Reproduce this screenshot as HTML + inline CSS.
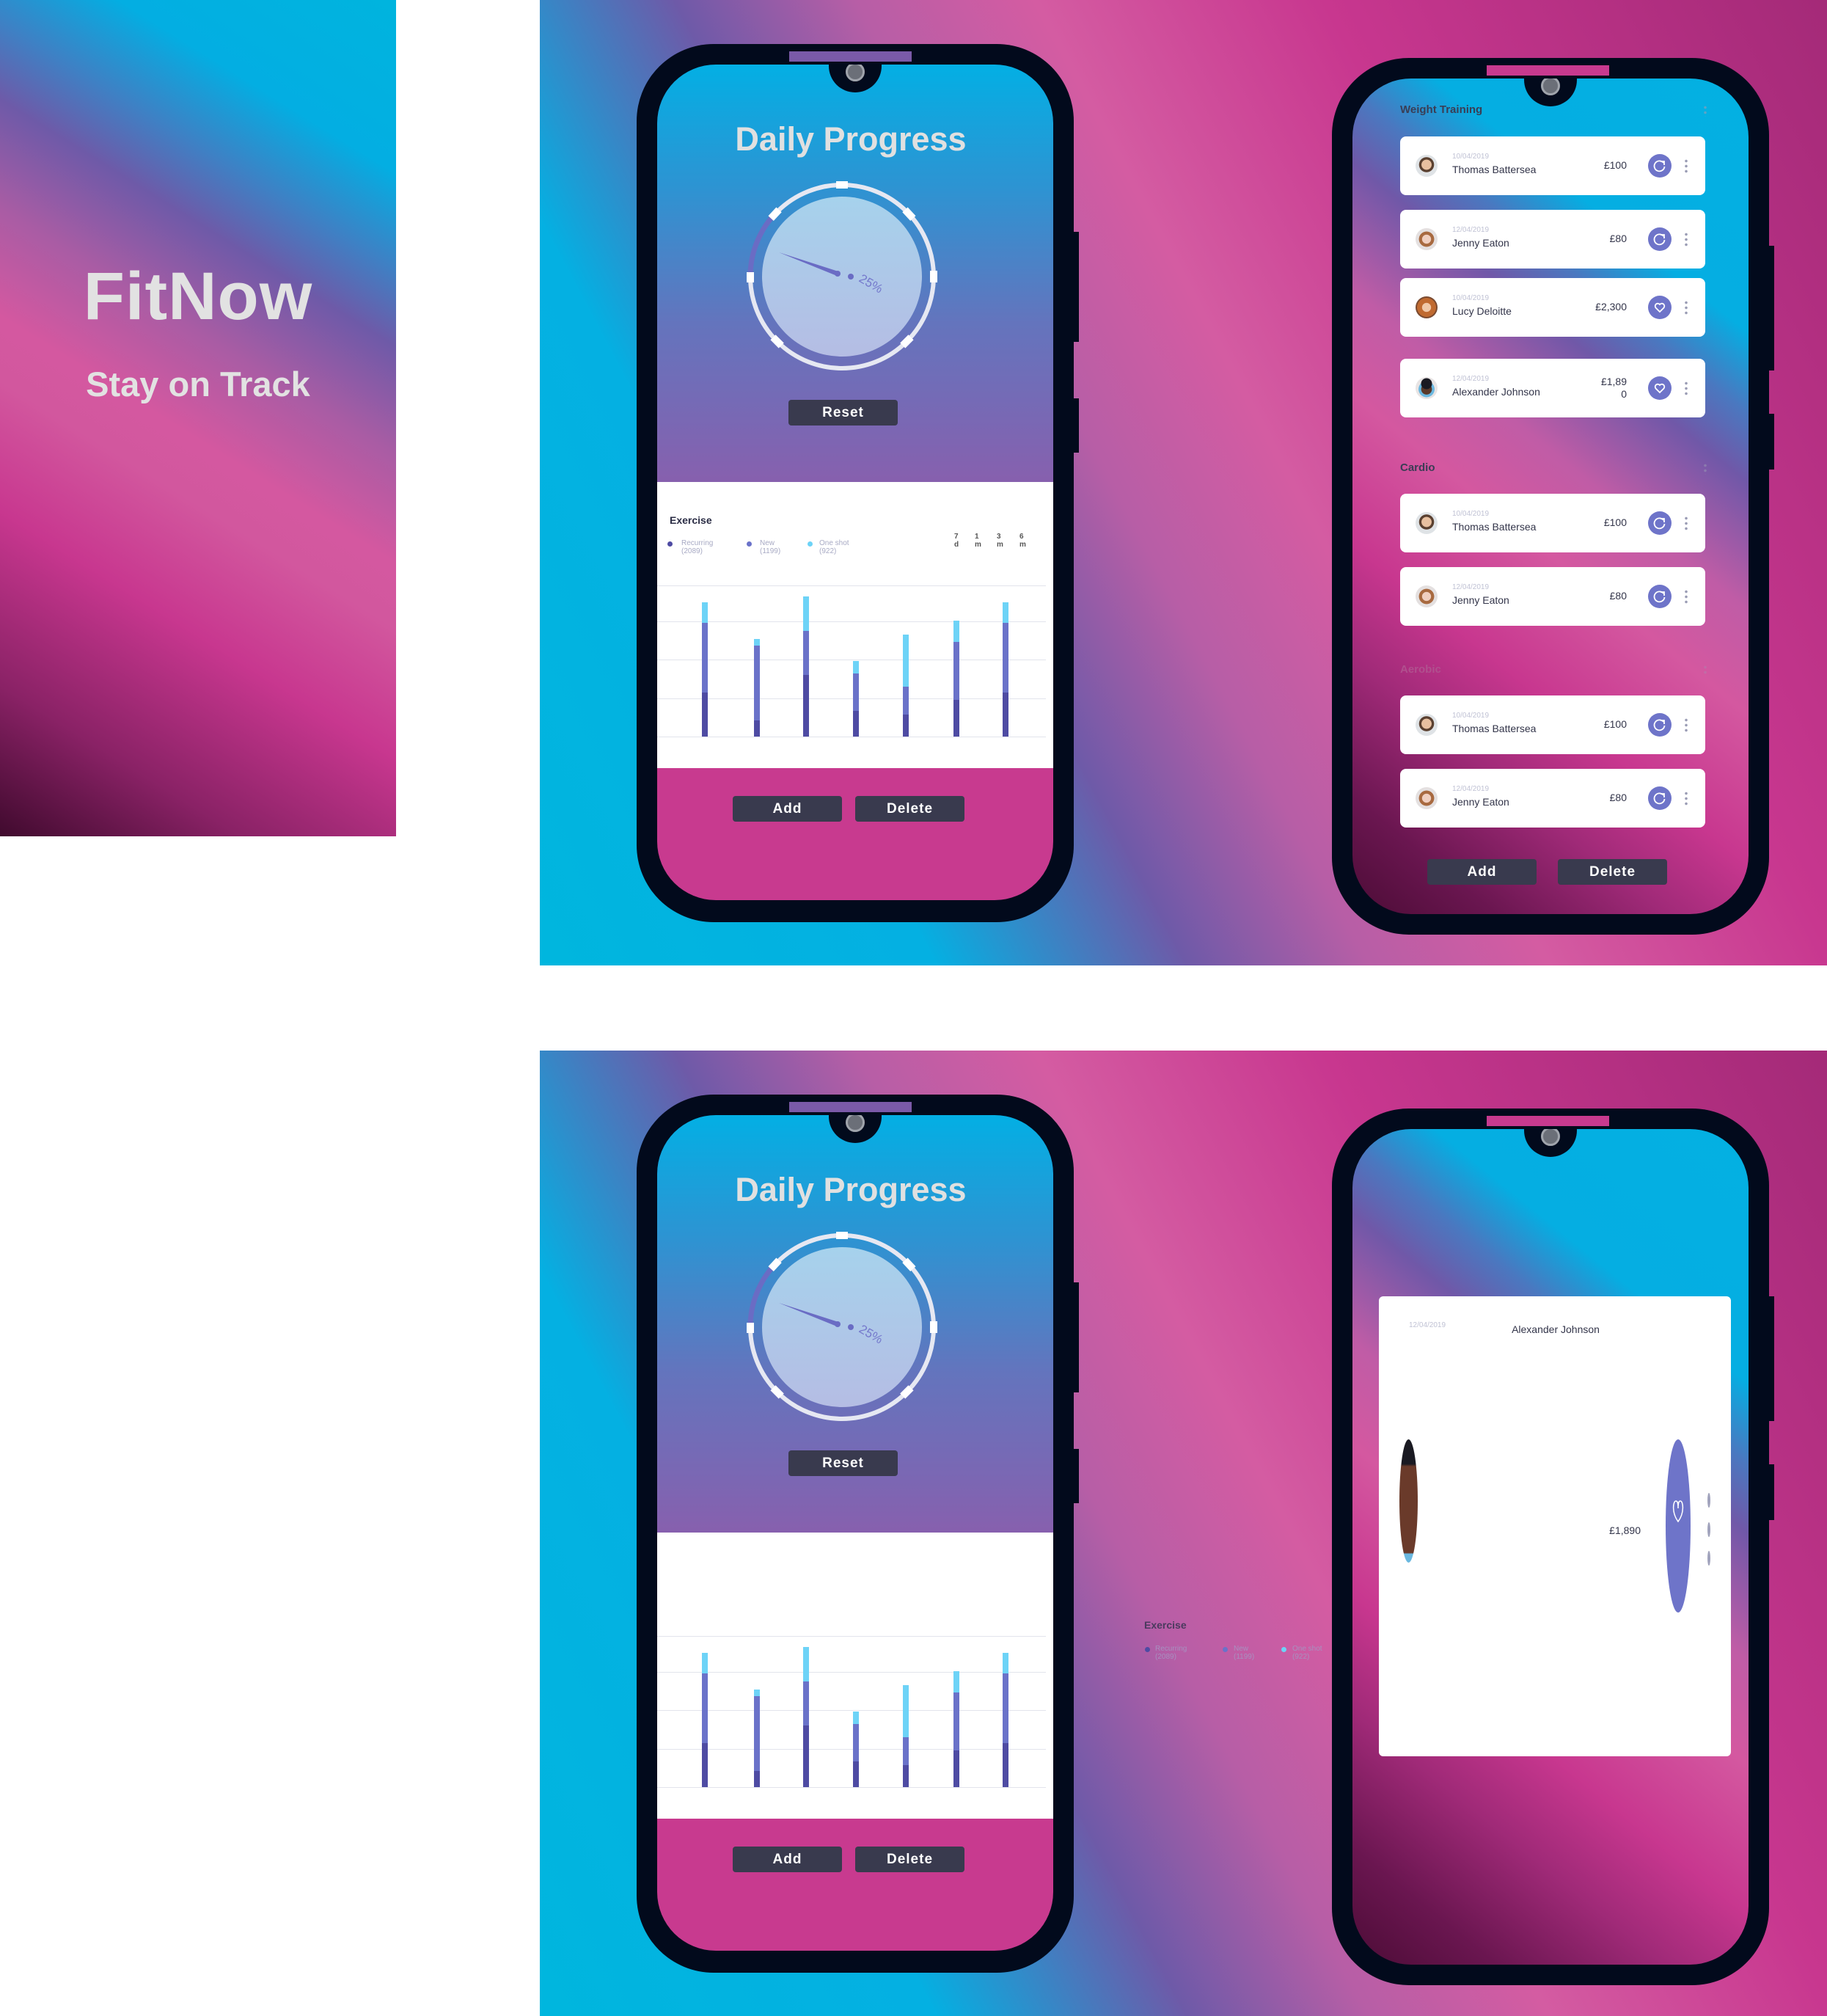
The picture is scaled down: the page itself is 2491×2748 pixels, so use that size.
<!DOCTYPE html>
<html><head><meta charset="utf-8">
<style>
*{margin:0;padding:0;box-sizing:border-box}
body{width:2491px;height:2748px;background:#fff;position:relative;overflow:hidden;font-family:"Liberation Sans",sans-serif}
.abs{position:absolute}
.left{left:0;top:0;width:540px;height:1140px;background:linear-gradient(212deg,#00b4de 0%,#03aee2 16%,#3f80c4 25%,#6e5aa8 32%,#a95ca4 42%,#d458a0 52%,#d2579e 58%,#c8378f 70%,#8a2266 86%,#400a2e 100%)}
.banner{left:736px;width:1755px;height:1316px;background:linear-gradient(62deg,#00b6de 0%,#04b0e2 22%,#6e5aa8 36%,#b75ea6 46%,#d45ca2 56%,#c8378f 72%,#a42a78 100%)}
.phone{position:absolute;width:596px;height:1197px;background:#020a1c;border-radius:105px}
.screen{position:absolute;left:28px;top:28px;width:540px;height:1139px;border-radius:80px;overflow:hidden}
.notch{position:absolute;left:50%;margin-left:-36px;top:-14px;width:72px;height:52px;background:#020a1c;border-radius:0 0 36px 36px}
.cam{position:absolute;left:50%;margin-left:-13px;top:11px;width:26px;height:26px;border-radius:50%;background:#6b6f78;border:3px solid #a0a4ac}
.spk{position:absolute;left:208px;top:10px;width:167px;height:14px}
.side{position:absolute;right:-7px;width:8px;background:#020a1c}
.btn{position:absolute;height:35px;width:149px;background:#393a4e;border-radius:4px;color:#fff;font-weight:bold;font-size:19px;text-align:center;line-height:35px;letter-spacing:1px}
.title{position:absolute;left:0;width:528px;text-align:center;top:76px;font-size:45px;font-weight:bold;color:#e0e0e0}
.bar{position:absolute;width:8px}
.grid{position:absolute;left:0;width:530px;height:1px;background:#e2e4ec}
.card{position:absolute;left:65px;width:416px;height:80px;background:#fff;border-radius:8px}
.av{position:absolute;left:21px;top:25px;width:30px;height:30px;border-radius:50%;overflow:hidden}
.date{position:absolute;left:71px;top:22px;font-size:10px;color:#c0c2d4}
.name{position:absolute;left:71px;top:37px;font-size:14px;color:#33354a}
.price{position:absolute;right:107px;top:31px;font-size:14px;color:#33354a;text-align:right;line-height:17px}
.ic{position:absolute;left:338px;top:24px;width:32px;height:32px;border-radius:50%;background:#6e74c9}
.dots{position:absolute;left:388px;top:30px;width:4px;height:20px;background:radial-gradient(circle,#9a9cb4 1.6px,transparent 2px) 0 0/4px 7px repeat-y}
.sec{position:absolute;left:65px;font-size:15px;font-weight:bold;color:#3a3d55}
.lg{position:absolute;font-size:10px;color:#a8aac4;line-height:11px}
.lgd{position:absolute;width:7px;height:7px;border-radius:50%}
.scr2{background:linear-gradient(219deg,#03b0e2 0%,#05aee2 22%,#4a78c0 29%,#7058a8 35%,#c05ca6 46%,#d458a0 55%,#c8378f 68%,#a02a78 78%,#6a1650 90%,#4c0c36 100%)}
</style></head><body>

<div class="abs left">
  <div class="abs" style="left:0;width:540px;top:352px;text-align:center;font-size:92px;font-weight:bold;color:#e2e2e2;letter-spacing:1px">FitNow</div>
  <div class="abs" style="left:0;width:540px;top:496px;text-align:center;font-size:47px;font-weight:bold;color:#e2e2e2">Stay on Track</div>
</div>

<div class="abs banner" style="top:0"></div>
<div class="abs banner" style="top:1432px"></div>

<!-- PHONE 1 -->
<div class="phone" style="left:868px;top:60px">
  <div class="spk" style="background:#7a5aa8"></div>
  <div class="side" style="top:256px;height:150px"></div>
  <div class="side" style="top:483px;height:74px"></div>
  <div class="screen">
    <div class="abs" style="left:0;top:0;width:540px;height:569px;background:linear-gradient(180deg,#03afe4 0%,#2e93d2 30%,#6474bd 62%,#8760ae 100%)"></div>
    <div class="abs" style="left:0;top:569px;width:540px;height:390px;background:#fff"></div>
    <div class="abs" style="left:0;top:959px;width:540px;height:180px;background:#c83a8f"></div>
    <div class="notch"><div class="cam"></div></div>
    <div class="title">Daily Progress</div>
    <svg class="abs" style="left:102px;top:139px" width="300" height="300" viewBox="-150 -150 300 300">
      <defs><linearGradient id="gg" x1="0" y1="0" x2="0" y2="1"><stop offset="0" stop-color="#a6d2ec"/><stop offset="1" stop-color="#b5bde4"/></linearGradient></defs>
      <circle r="109" fill="url(#gg)"/>
      <circle r="125" fill="none" stroke="#e6e8f2" stroke-width="6"/>
      <path d="M -125 -4 A 125 125 0 0 1 -88 -89" fill="none" stroke="#6a6cc4" stroke-width="7"/>
      <g fill="#fff">
        <rect x="-8" y="-130" width="16" height="10"/>
        <rect x="120" y="-8" width="10" height="16"/>
        <rect x="-130" y="-6" width="10" height="14"/>
        <rect x="-8" y="-130" width="16" height="10" transform="rotate(47)"/>
        <rect x="-8" y="-130" width="16" height="10" transform="rotate(-47)"/>
        <rect x="-8" y="-130" width="16" height="10" transform="rotate(135)"/>
        <rect x="-8" y="-130" width="16" height="10" transform="rotate(-135)"/>
      </g>
      <path d="M -86 -33 L -5 -7 L -7 -1 Z" fill="#6a6cc4"/>
      <circle cx="-6" cy="-4" r="4" fill="#6a6cc4"/>
      <circle cx="12" cy="0" r="4" fill="#6a6cc4"/>
      <text x="22" y="6" font-size="17" fill="#7478cc" transform="rotate(30 22 6)" font-family="Liberation Sans">25%</text>
    </svg>
    <div class="btn" style="left:179px;top:457px">Reset</div>
    <div class="abs" style="left:17px;top:613px;font-size:14px;font-weight:bold;color:#2b2d45">Exercise</div>
    <div class="lgd" style="left:14px;top:650px;background:#4e4ba3"></div>
    <div class="lg" style="left:33px;top:647px">Recurring<br>(2089)</div>
    <div class="lgd" style="left:122px;top:650px;background:#6a72c9"></div>
    <div class="lg" style="left:140px;top:647px">New<br>(1199)</div>
    <div class="lgd" style="left:205px;top:650px;background:#6dd3f7"></div>
    <div class="lg" style="left:221px;top:647px">One shot<br>(922)</div>
    <div class="lg" style="left:405px;top:638px;color:#555;font-weight:bold">7<br>d</div>
    <div class="lg" style="left:433px;top:638px;color:#555;font-weight:bold">1<br>m</div>
    <div class="lg" style="left:463px;top:638px;color:#555;font-weight:bold">3<br>m</div>
    <div class="lg" style="left:494px;top:638px;color:#555;font-weight:bold">6<br>m</div>
    <div class="grid" style="top:710px"></div><div class="grid" style="top:759px"></div><div class="grid" style="top:811px"></div><div class="grid" style="top:864px"></div><div class="grid" style="top:916px"></div>
    <div class="bar" style="left:61px;top:733px;height:183px;background:linear-gradient(#6dd3f7 0 28px,#6a72c9 28px 123px,#4e4ba3 123px)"></div>
    <div class="bar" style="left:132px;top:783px;height:133px;background:linear-gradient(#6dd3f7 0 9px,#6a72c9 9px 111px,#4e4ba3 111px)"></div>
    <div class="bar" style="left:199px;top:725px;height:191px;background:linear-gradient(#6dd3f7 0 47px,#6a72c9 47px 107px,#4e4ba3 107px)"></div>
    <div class="bar" style="left:267px;top:813px;height:103px;background:linear-gradient(#6dd3f7 0 17px,#6a72c9 17px 68px,#4e4ba3 68px)"></div>
    <div class="bar" style="left:335px;top:777px;height:139px;background:linear-gradient(#6dd3f7 0 71px,#6a72c9 71px 109px,#4e4ba3 109px)"></div>
    <div class="bar" style="left:404px;top:758px;height:158px;background:linear-gradient(#6dd3f7 0 29px,#6a72c9 29px 108px,#4e4ba3 108px)"></div>
    <div class="bar" style="left:471px;top:733px;height:183px;background:linear-gradient(#6dd3f7 0 28px,#6a72c9 28px 123px,#4e4ba3 123px)"></div>
    <div class="btn" style="left:103px;top:997px">Add</div>
    <div class="btn" style="left:270px;top:997px">Delete</div>
  </div>
</div>

<!-- PHONE 3 -->
<div class="phone" style="left:868px;top:1492px">
  <div class="spk" style="background:#7a5aa8"></div>
  <div class="side" style="top:256px;height:150px"></div>
  <div class="side" style="top:483px;height:74px"></div>
  <div class="screen">
    <div class="abs" style="left:0;top:0;width:540px;height:569px;background:linear-gradient(180deg,#03afe4 0%,#2e93d2 30%,#6474bd 62%,#8760ae 100%)"></div>
    <div class="abs" style="left:0;top:569px;width:540px;height:390px;background:#fff"></div>
    <div class="abs" style="left:0;top:959px;width:540px;height:180px;background:#c83a8f"></div>
    <div class="notch"><div class="cam"></div></div>
    <div class="title">Daily Progress</div>
    <svg class="abs" style="left:102px;top:139px" width="300" height="300" viewBox="-150 -150 300 300">
      <defs><linearGradient id="gg2" x1="0" y1="0" x2="0" y2="1"><stop offset="0" stop-color="#a6d2ec"/><stop offset="1" stop-color="#b5bde4"/></linearGradient></defs>
      <circle r="109" fill="url(#gg2)"/>
      <circle r="125" fill="none" stroke="#e6e8f2" stroke-width="6"/>
      <path d="M -125 -4 A 125 125 0 0 1 -88 -89" fill="none" stroke="#6a6cc4" stroke-width="7"/>
      <g fill="#fff">
        <rect x="-8" y="-130" width="16" height="10"/>
        <rect x="120" y="-8" width="10" height="16"/>
        <rect x="-130" y="-6" width="10" height="14"/>
        <rect x="-8" y="-130" width="16" height="10" transform="rotate(47)"/>
        <rect x="-8" y="-130" width="16" height="10" transform="rotate(-47)"/>
        <rect x="-8" y="-130" width="16" height="10" transform="rotate(135)"/>
        <rect x="-8" y="-130" width="16" height="10" transform="rotate(-135)"/>
      </g>
      <path d="M -86 -33 L -5 -7 L -7 -1 Z" fill="#6a6cc4"/>
      <circle cx="-6" cy="-4" r="4" fill="#6a6cc4"/>
      <circle cx="12" cy="0" r="4" fill="#6a6cc4"/>
      <text x="22" y="6" font-size="17" fill="#7478cc" transform="rotate(30 22 6)" font-family="Liberation Sans">25%</text>
    </svg>
    <div class="btn" style="left:179px;top:457px">Reset</div>
    <div class="grid" style="top:710px"></div><div class="grid" style="top:759px"></div><div class="grid" style="top:811px"></div><div class="grid" style="top:864px"></div><div class="grid" style="top:916px"></div>
    <div class="bar" style="left:61px;top:733px;height:183px;background:linear-gradient(#6dd3f7 0 28px,#6a72c9 28px 123px,#4e4ba3 123px)"></div>
    <div class="bar" style="left:132px;top:783px;height:133px;background:linear-gradient(#6dd3f7 0 9px,#6a72c9 9px 111px,#4e4ba3 111px)"></div>
    <div class="bar" style="left:199px;top:725px;height:191px;background:linear-gradient(#6dd3f7 0 47px,#6a72c9 47px 107px,#4e4ba3 107px)"></div>
    <div class="bar" style="left:267px;top:813px;height:103px;background:linear-gradient(#6dd3f7 0 17px,#6a72c9 17px 68px,#4e4ba3 68px)"></div>
    <div class="bar" style="left:335px;top:777px;height:139px;background:linear-gradient(#6dd3f7 0 71px,#6a72c9 71px 109px,#4e4ba3 109px)"></div>
    <div class="bar" style="left:404px;top:758px;height:158px;background:linear-gradient(#6dd3f7 0 29px,#6a72c9 29px 108px,#4e4ba3 108px)"></div>
    <div class="bar" style="left:471px;top:733px;height:183px;background:linear-gradient(#6dd3f7 0 28px,#6a72c9 28px 123px,#4e4ba3 123px)"></div>
    <div class="btn" style="left:103px;top:997px">Add</div>
    <div class="btn" style="left:270px;top:997px">Delete</div>
  </div>
</div>

<!-- PHONE 2 -->
<div class="phone" style="left:1816px;top:79px;height:1195px">
  <div class="spk" style="background:#c83a8f;left:211px"></div>
  <div class="side" style="top:256px;height:170px"></div>
  <div class="side" style="top:485px;height:76px"></div>
  <div class="screen scr2">
    <div class="notch"><div class="cam"></div></div>
    <div class="sec" style="top:34px">Weight Training</div>
    <div class="dots" style="left:479px;top:36px;height:16px;opacity:.6"></div>

    <div class="card" style="top:79px"><div class="av" style="background:radial-gradient(circle at 50% 45%,#e8c0a0 0 30%,#5a4030 32% 45%,#dfe3e6 47%)"></div><div class="date">10/04/2019</div><div class="name">Thomas Battersea</div><div class="price">£100</div><div class="ic"><svg width="32" height="32" viewBox="0 0 32 32"><path d="M21 12 A7 7 0 1 0 22.5 17" fill="none" stroke="#fff" stroke-width="1.8"/><path d="M17 10 L22 10 L22 15" fill="none" stroke="#fff" stroke-width="1.8"/></svg></div><div class="dots"></div></div>
    <div class="card" style="top:179px"><div class="av" style="background:radial-gradient(circle at 50% 50%,#f0cfc0 0 28%,#a86a40 30% 48%,#e4e0e0 50%)"></div><div class="date">12/04/2019</div><div class="name">Jenny Eaton</div><div class="price">£80</div><div class="ic"><svg width="32" height="32" viewBox="0 0 32 32"><path d="M21 12 A7 7 0 1 0 22.5 17" fill="none" stroke="#fff" stroke-width="1.8"/><path d="M17 10 L22 10 L22 15" fill="none" stroke="#fff" stroke-width="1.8"/></svg></div><div class="dots"></div></div>
    <div class="card" style="top:272px"><div class="av" style="background:radial-gradient(circle at 50% 50%,#f0c8a8 0 28%,#c06a30 30% 60%,#7a4a30 62%)"></div><div class="date">10/04/2019</div><div class="name">Lucy Deloitte</div><div class="price">£2,300</div><div class="ic"><svg width="32" height="32" viewBox="0 0 32 32"><path d="M16 22 L10.5 16.5 A3.3 3.3 0 0 1 16 12 A3.3 3.3 0 0 1 21.5 16.5 Z" fill="none" stroke="#fff" stroke-width="1.8"/></svg></div><div class="dots"></div></div>
    <div class="card" style="top:382px"><div class="av" style="background:radial-gradient(circle at 50% 30%,#1a1a22 0 28%,transparent 30%),radial-gradient(circle at 50% 55%,#5a3a2a 0 32%,#6ab8e0 34% 48%,#e8e4e4 50%)"></div><div class="date">12/04/2019</div><div class="name">Alexander Johnson</div><div class="price" style="top:23px">£1,89<br>0</div><div class="ic"><svg width="32" height="32" viewBox="0 0 32 32"><path d="M16 22 L10.5 16.5 A3.3 3.3 0 0 1 16 12 A3.3 3.3 0 0 1 21.5 16.5 Z" fill="none" stroke="#fff" stroke-width="1.8"/></svg></div><div class="dots"></div></div>

    <div class="sec" style="top:522px">Cardio</div>
    <div class="dots" style="left:479px;top:524px;height:16px;opacity:.5"></div>
    <div class="card" style="top:566px"><div class="av" style="background:radial-gradient(circle at 50% 45%,#e8c0a0 0 30%,#5a4030 32% 45%,#dfe3e6 47%)"></div><div class="date">10/04/2019</div><div class="name">Thomas Battersea</div><div class="price">£100</div><div class="ic"><svg width="32" height="32" viewBox="0 0 32 32"><path d="M21 12 A7 7 0 1 0 22.5 17" fill="none" stroke="#fff" stroke-width="1.8"/><path d="M17 10 L22 10 L22 15" fill="none" stroke="#fff" stroke-width="1.8"/></svg></div><div class="dots"></div></div>
    <div class="card" style="top:666px"><div class="av" style="background:radial-gradient(circle at 50% 50%,#f0cfc0 0 28%,#a86a40 30% 48%,#e4e0e0 50%)"></div><div class="date">12/04/2019</div><div class="name">Jenny Eaton</div><div class="price">£80</div><div class="ic"><svg width="32" height="32" viewBox="0 0 32 32"><path d="M21 12 A7 7 0 1 0 22.5 17" fill="none" stroke="#fff" stroke-width="1.8"/><path d="M17 10 L22 10 L22 15" fill="none" stroke="#fff" stroke-width="1.8"/></svg></div><div class="dots"></div></div>

    <div class="sec" style="top:797px;color:#b0508e">Aerobic</div>
    <div class="dots" style="left:479px;top:799px;height:16px;opacity:.3"></div>
    <div class="card" style="top:841px"><div class="av" style="background:radial-gradient(circle at 50% 45%,#e8c0a0 0 30%,#5a4030 32% 45%,#dfe3e6 47%)"></div><div class="date">10/04/2019</div><div class="name">Thomas Battersea</div><div class="price">£100</div><div class="ic"><svg width="32" height="32" viewBox="0 0 32 32"><path d="M21 12 A7 7 0 1 0 22.5 17" fill="none" stroke="#fff" stroke-width="1.8"/><path d="M17 10 L22 10 L22 15" fill="none" stroke="#fff" stroke-width="1.8"/></svg></div><div class="dots"></div></div>
    <div class="card" style="top:941px"><div class="av" style="background:radial-gradient(circle at 50% 50%,#f0cfc0 0 28%,#a86a40 30% 48%,#e4e0e0 50%)"></div><div class="date">12/04/2019</div><div class="name">Jenny Eaton</div><div class="price">£80</div><div class="ic"><svg width="32" height="32" viewBox="0 0 32 32"><path d="M21 12 A7 7 0 1 0 22.5 17" fill="none" stroke="#fff" stroke-width="1.8"/><path d="M17 10 L22 10 L22 15" fill="none" stroke="#fff" stroke-width="1.8"/></svg></div><div class="dots"></div></div>

    <div class="btn" style="left:102px;top:1064px">Add</div>
    <div class="btn" style="left:280px;top:1064px">Delete</div>
  </div>
</div>

<!-- legend outside -->
<div class="abs" style="left:1560px;top:2207px;font-size:14px;font-weight:bold;color:#4a3a5e">Exercise</div>
<div class="lgd" style="left:1561px;top:2245px;background:#4e4ba3"></div>
<div class="lg" style="left:1575px;top:2242px;color:#a890c0">Recurring<br>(2089)</div>
<div class="lgd" style="left:1667px;top:2245px;background:#6a72c9"></div>
<div class="lg" style="left:1682px;top:2242px;color:#a890c0">New<br>(1199)</div>
<div class="lgd" style="left:1747px;top:2245px;background:#6dd3f7"></div>
<div class="lg" style="left:1762px;top:2242px;color:#a890c0">One shot<br>(922)</div>

<!-- PHONE 4 -->
<div class="phone" style="left:1816px;top:1511px;height:1195px">
  <div class="spk" style="background:#c83a8f;left:211px"></div>
  <div class="side" style="top:256px;height:170px"></div>
  <div class="side" style="top:485px;height:76px"></div>
  <div class="screen scr2">
    <div class="notch"><div class="cam"></div></div>
    <div class="abs" style="left:36px;top:228px;width:480px;height:627px;background:#fff;border-radius:6px">
      <div class="abs" style="left:41px;top:34px;font-size:10px;color:#c0c2d4">12/04/2019</div>
      <div class="abs" style="left:141px;width:200px;text-align:center;top:37px;font-size:14px;color:#33354a">Alexander Johnson</div>
      <div class="abs" style="left:28px;top:195px;width:25px;height:168px;border-radius:50%;background:linear-gradient(#1a1a22 0 20%,#6a3a2a 22% 92%,#6ab8e0 93%)"></div>
      <div class="abs" style="right:123px;top:311px;font-size:14px;color:#33354a">£1,890</div>
      <div class="abs" style="left:391px;top:195px;width:34px;height:236px;border-radius:50%;background:#6e74c9"><svg width="34" height="236" viewBox="0 0 34 236"><path d="M17 112 C8 100 10 84 14 84 C17 84 17 90 17 94 C17 90 17 84 20 84 C24 84 26 100 17 112 Z" fill="none" stroke="#fff" stroke-width="1.5"/></svg></div>
      <div class="abs" style="left:448px;top:268px;width:4px;height:20px;border-radius:50%;background:#a0a2bc"></div>
      <div class="abs" style="left:448px;top:308px;width:4px;height:20px;border-radius:50%;background:#a0a2bc"></div>
      <div class="abs" style="left:448px;top:347px;width:4px;height:20px;border-radius:50%;background:#a0a2bc"></div>
    </div>
  </div>
</div>

</body></html>
